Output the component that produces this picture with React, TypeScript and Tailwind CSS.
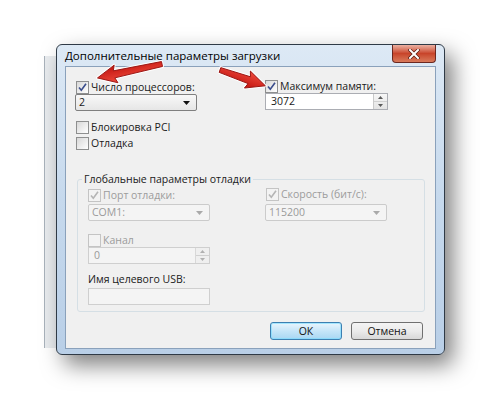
import React from "react";

function Check({ checked, disabled }: { checked?: boolean; disabled?: boolean }) {
  return (
    <span
      className={
        disabled
          ? "w-[13px] h-[13px] shrink-0 border border-[#c4c4c4] bg-[#f3f3f3] flex items-center justify-center"
          : "w-[13px] h-[13px] shrink-0 border border-[#8e8f8f] bg-gradient-to-br from-[#d8d8d8] to-[#ffffff] flex items-center justify-center"
      }
    >
      {checked && (
        <svg width="11" height="11" viewBox="0 0 11 11">
          <path
            d="M2 5.5 L4.3 8.3 L9 1.8"
            fill="none"
            stroke={disabled ? "#b5b5b5" : "#3a4d8c"}
            strokeWidth="1.6"
          />
        </svg>
      )}
    </span>
  );
}

function CheckRow({ label, checked, disabled }: { label: string; checked?: boolean; disabled?: boolean }) {
  return (
    <div className="flex items-center gap-[2px] h-[13px]">
      <Check checked={checked} disabled={disabled} />
      <span className={disabled ? "text-[#9c9c9c] leading-[13px]" : "leading-[13px]"}>{label}</span>
    </div>
  );
}

function Combo({ value, disabled }: { value: string; disabled?: boolean }) {
  return (
    <div
      className={
        disabled
          ? "w-[122px] h-[17px] border border-[#cbcbcb] rounded-[2px] bg-[#f4f4f4] flex items-center justify-between pl-[3px] pr-[6px] text-[#9a9a9a]"
          : "w-[122px] h-[17px] border border-[#7f7f7f] rounded-[2px] bg-gradient-to-b from-[#f8f8f8] to-[#e6e6e6] flex items-center justify-between pl-[3px] pr-[6px]"
      }
    >
      <span className="leading-[13px]">{value}</span>
      <svg width="7" height="4" viewBox="0 0 7 4">
        <path d="M0 0 L7 0 L3.5 4 Z" fill={disabled ? "#a9a9a9" : "#111"} />
      </svg>
    </div>
  );
}

function Spin({ value, disabled }: { value: string; disabled?: boolean }) {
  return (
    <div
      className={
        disabled
          ? "w-[122px] h-[17px] border border-[#cfcfcf] bg-[#f4f4f4] flex items-stretch text-[#9a9a9a]"
          : "w-[123px] h-[17px] border border-[#abadb3] bg-white flex items-stretch"
      }
    >
      <span className="flex-1 pl-[5px] leading-[15px]">{value}</span>
      <div
        className={
          disabled
            ? "w-[14px] flex flex-col border-l border-[#d8d8d8] bg-[#efefef]"
            : "w-[14px] flex flex-col border-l border-[#c9c9c9] bg-gradient-to-b from-[#f7f7f7] to-[#e3e3e3]"
        }
      >
        <div className="flex-1 flex items-center justify-center border-b border-[#d0d0d0]">
          <svg width="5" height="3" viewBox="0 0 5 3">
            <path d="M0 3 L5 3 L2.5 0 Z" fill={disabled ? "#b0b0b0" : "#5a5a5a"} />
          </svg>
        </div>
        <div className="flex-1 flex items-center justify-center">
          <svg width="5" height="3" viewBox="0 0 5 3">
            <path d="M0 0 L5 0 L2.5 3 Z" fill={disabled ? "#b0b0b0" : "#5a5a5a"} />
          </svg>
        </div>
      </div>
    </div>
  );
}

function Arrow({ x, y, angle, len }: { x: number; y: number; angle: number; len: number }) {
  const h = 17;
  const d = `M0 -2.5 L${len - h} -3.6 L${len - h - 2} -9 L${len} 0 L${len - h - 2} 9 L${len - h} 3.6 L0 2.5 Z`;
  return (
    <g transform={`translate(${x} ${y}) rotate(${angle})`}>
      <path d={d} fill="none" stroke="#ffffff" strokeWidth="3" strokeLinejoin="round" opacity="0.9" />
      <path d={d} fill="url(#redg)" stroke="#9a1512" strokeWidth="0.9" strokeLinejoin="round" />
    </g>
  );
}

export default function App() {
  return (
    <div className="w-[500px] h-[400px] bg-white relative overflow-hidden font-['Open_Sans','Noto_Sans',sans-serif] text-[10.5px] text-[#1a1a1a]">
      {/* parent window sliver behind */}
      <div className="absolute left-[44px] top-[56px] w-[16px] h-[292px] bg-[#e9ecef] border-l border-[#a9b2bb]" />

      <div className="ml-[56px] mt-[44px] w-[389px] h-[311px] flex flex-col rounded-[6px] border border-[#2f3a46] bg-gradient-to-b from-[#dde9f5] via-[#c6d9ed] to-[#b9cfe7] shadow-[8px_10px_22px_rgba(0,0,0,0.5)] px-[8px] pb-[5px] relative">
        <div className="h-[21px] flex items-start justify-between">
          <span className="pt-[3px] text-[11.5px] leading-[15px] text-black">Дополнительные параметры загрузки</span>
          <div className="w-[44px] h-[18px] rounded-b-[4px] border border-[#6b271f] border-t-0 bg-gradient-to-b from-[#eab0a2] via-[#c8442a] to-[#d8795a] flex items-center justify-center">
            <svg width="12" height="10" viewBox="0 0 12 10">
              <path d="M2 1 L10 9 M10 1 L2 9" stroke="#5a1a12" strokeWidth="3.4" strokeLinecap="square" />
              <path d="M2 1 L10 9 M10 1 L2 9" stroke="#ffffff" strokeWidth="2" strokeLinecap="square" />
            </svg>
          </div>
        </div>

        <div className="flex-1 bg-[#f0f0f0] border border-[#8aa1bb] flex flex-col pl-[10px] pt-[14px]">
          <div className="flex">
            <div className="w-[189px] flex flex-col">
              <CheckRow label="Число процессоров:" checked />
              <div className="-ml-[1px]">
                <Combo value="2" />
              </div>
              <div className="mt-[10px]">
                <CheckRow label="Блокировка PCI" />
              </div>
              <div className="mt-[3px]">
                <CheckRow label="Отладка" />
              </div>
            </div>
            <div className="flex flex-col -mt-[1px]">
              <CheckRow label="Максимум памяти:" checked />
              <Spin value="3072" />
            </div>
          </div>

          <fieldset className="ml-[1px] mt-[23px] w-[348px] h-[139px] border border-[#d5dfe5] rounded-[3px] pl-[10px]">
            <legend className="-ml-[6px] px-[2px] leading-[13px]">Глобальные параметры отладки</legend>
            <div className="flex mt-[3px]">
              <div className="w-[178px] flex flex-col">
                <CheckRow label="Порт отладки:" checked disabled />
                <div className="mt-[2px]">
                  <Combo value="COM1:" disabled />
                </div>
                <div className="mt-[13px]">
                  <CheckRow label="Канал" disabled />
                </div>
                <Spin value="0" disabled />
                <span className="mt-[9px] leading-[13px]">Имя целевого USB:</span>
                <div className="mt-[2px] w-[122px] h-[17px] border border-[#cfcfcf] bg-[#f4f4f4]" />
              </div>
              <div className="flex flex-col -mt-[1px]">
                <CheckRow label="Скорость (бит/с):" checked disabled />
                <div className="mt-[3px] -ml-[1px]">
                  <Combo value="115200" disabled />
                </div>
              </div>
            </div>
          </fieldset>

          <div className="flex justify-end gap-[9px] pr-[12px] mt-[10px]">
            <button className="w-[72px] h-[18px] rounded-[3px] border border-[#3c7fb1] bg-gradient-to-b from-[#e9f5fd] via-[#c5e5f8] to-[#a9d7f3] leading-[14px] text-[#111] shadow-[inset_0_0_0_1px_rgba(120,220,255,0.6)]">
              ОК
            </button>
            <button className="w-[72px] h-[18px] rounded-[3px] border border-[#707070] bg-gradient-to-b from-[#f4f4f4] via-[#ebebeb] to-[#d8d8d8] leading-[14px] text-[#111]">
              Отмена
            </button>
          </div>
        </div>
      </div>

      <svg className="absolute left-0 top-0 pointer-events-none" width="500" height="400">
        <defs>
          <linearGradient id="redg" x1="0" y1="0" x2="0" y2="1">
            <stop offset="0" stopColor="#ef4a3c" />
            <stop offset="1" stopColor="#c0130f" />
          </linearGradient>
        </defs>
        <Arrow x={162} y={64} angle={167.8} len={66} />
        <Arrow x={220} y={70} angle={19.2} len={48} />
      </svg>
    </div>
  );
}
